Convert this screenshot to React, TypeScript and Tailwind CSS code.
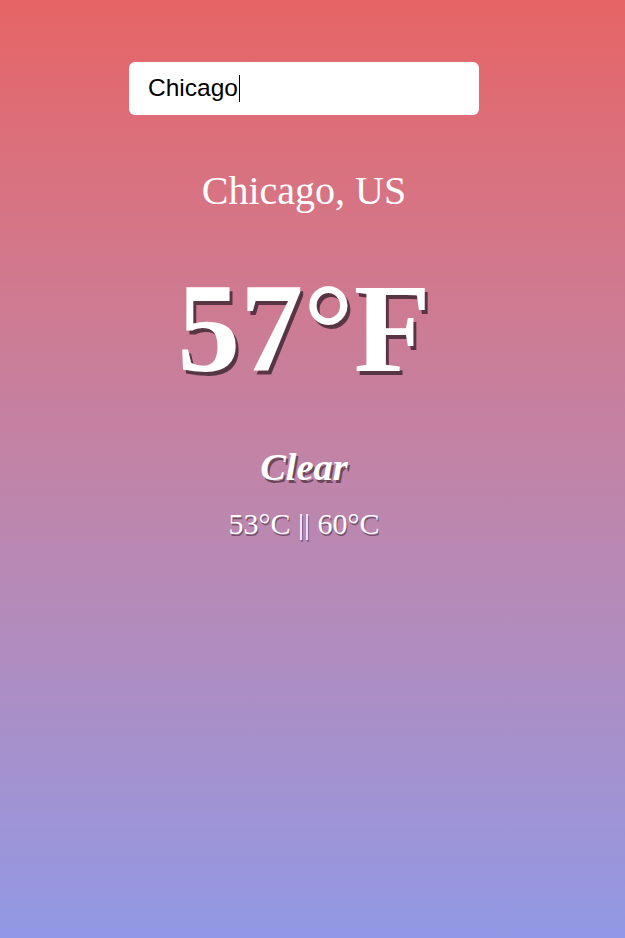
export default function App() {
  return (
    <div className="h-[938px] w-[625px] bg-linear-to-b from-[#e66465] to-[#9198e5] pr-[17px] pt-[62px] text-center text-white">
      <div className="mx-auto flex h-[53px] w-[350px] items-center rounded-[6px] bg-white pl-[19px]">
        <span className="font-['Liberation_Sans',sans-serif] text-[24.5px] leading-none text-black">Chicago</span>
        <span className="ml-[1px] h-[27px] w-[1px] bg-black" />
      </div>
      <div className="mt-[52px] font-['Liberation_Serif',serif] text-[40px] leading-[1.2]">Chicago, US</div>
      <h1 className="mt-[38px] font-['Liberation_Serif',serif] text-[126px] font-bold leading-[1.2] text-white [text-shadow:3px_4px_0_rgba(50,30,40,0.75)]">
        57°F
      </h1>
      <div className="mt-[40px] font-['Liberation_Serif',serif] text-[38.5px] font-bold italic leading-[1.2] [text-shadow:2px_3px_0_rgba(50,30,40,0.6)]">
        Clear
      </div>
      <div className="mt-[16px] font-['Liberation_Serif',serif] text-[30px] leading-[1.2] [text-shadow:1px_2px_0_rgba(50,30,40,0.5)]">
        53°C || 60°C
      </div>
    </div>
  );
}
